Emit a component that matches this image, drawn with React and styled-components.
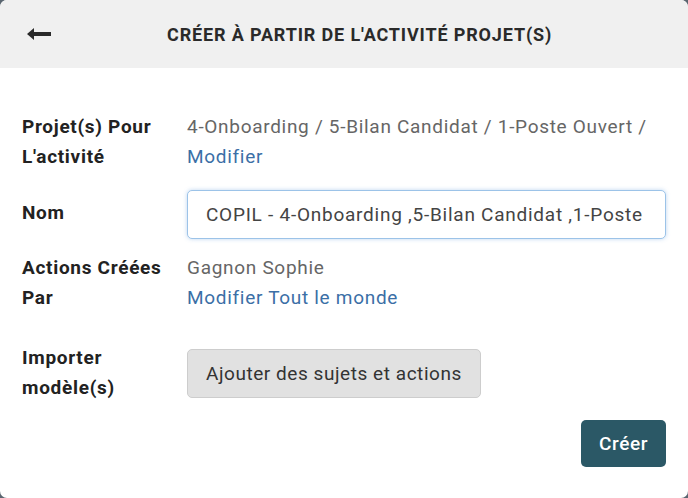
import React from 'react';
import styled, { createGlobalStyle } from 'styled-components';

const GlobalStyle = createGlobalStyle`
  html, body {
    margin: 0;
    padding: 0;
    background: #5a6670;
  }
  body {
    font-family: Roboto, "Liberation Sans", sans-serif;
  }
  * { box-sizing: border-box; }
`;

const Modal = styled.div`
  width: 688px;
  height: 498px;
  background: #fff;
  border-radius: 7px;
  overflow: hidden;
  display: flex;
  flex-direction: column;
`;

const Header = styled.div`
  height: 68px;
  background: #f0f0f0;
  display: flex;
  align-items: center;
  padding-left: 26px;
`;

const BackButton = styled.button`
  border: 0;
  background: none;
  padding: 0;
  width: 28px;
  height: 20px;
  display: flex;
  align-items: center;
  cursor: pointer;
`;

const Title = styled.h1`
  margin: 0 0 0 113px;
  font-size: 18px;
  font-weight: 700;
  color: #2a2a2a;
  letter-spacing: 0.85px;
`;

const Body = styled.div`
  flex: 1;
  display: flex;
  flex-direction: column;
  padding: 44px 22px 0 22px;
  font-size: 19px;
  letter-spacing: 0.7px;
`;

const Row = styled.div`
  display: grid;
  grid-template-columns: 165px 1fr;
  align-items: ${p => (p.$center ? 'center' : 'start')};
  margin-bottom: ${p => p.$after || 16}px;
`;

const Label = styled.div`
  font-weight: 700;
  line-height: 30px;
  color: #222;
  margin-top: ${p => p.$lift || 0}px;
`;

const Value = styled.div`
  line-height: 30px;
  color: #666;
`;

const Link = styled.a`
  display: block;
  color: #3b6fa6;
  text-decoration: none;
  cursor: pointer;
`;

const Input = styled.input`
  width: 100%;
  height: 49px;
  border: 1px solid #9cc3e8;
  border-radius: 5px;
  box-shadow: 0 0 4px rgba(110, 165, 225, 0.45);
  padding: 0 18px;
  font-family: inherit;
  font-size: 19px;
  letter-spacing: 0.75px;
  color: #444;
  outline: none;
`;

const GreyButton = styled.button`
  justify-self: start;
  height: 49px;
  padding: 0 18px;
  background: #e1e1e1;
  border: 1px solid #cdcdcd;
  border-radius: 5px;
  font-family: inherit;
  font-size: 19px;
  letter-spacing: 0.55px;
  color: #333;
  cursor: pointer;
`;

const Footer = styled.div`
  display: flex;
  justify-content: flex-end;
`;

const PrimaryButton = styled.button`
  height: 47px;
  padding: 0 18px;
  background: #2b5866;
  border: 0;
  border-radius: 5px;
  font-family: inherit;
  font-size: 19px;
  letter-spacing: 0.6px;
  font-weight: 500;
  color: #fff;
  cursor: pointer;
`;

const ArrowLeft = () => (
  <svg width="26" height="14" viewBox="0 0 26 14">
    <path d="M1 7 L8 1 L8 5 L25 5 L25 9 L8 9 L8 13 Z" fill="#2a2a2a" />
  </svg>
);

export default function App() {
  return (
    <>
      <GlobalStyle />
      <Modal>
        <Header>
          <BackButton aria-label="Retour">
            <ArrowLeft />
          </BackButton>
          <Title>CRÉER À PARTIR DE L'ACTIVITÉ PROJET(S)</Title>
        </Header>
        <Body>
          <Row $after={18}>
            <Label>Projet(s) Pour<br />L'activité</Label>
            <Value>
              4-Onboarding / 5-Bilan Candidat / 1-Poste Ouvert /
              <Link>Modifier</Link>
            </Value>
          </Row>
          <Row $center $after={14}>
            <Label $lift={-4}>Nom</Label>
            <Input defaultValue="COPIL - 4-Onboarding ,5-Bilan Candidat ,1-Poste Ouvert" />
          </Row>
          <Row $after={30}>
            <Label>Actions Créées<br />Par</Label>
            <Value>
              Gagnon Sophie
              <Link>Modifier Tout le monde</Link>
            </Value>
          </Row>
          <Row $center $after={17}>
            <Label>Importer<br />modèle(s)</Label>
            <GreyButton>Ajouter des sujets et actions</GreyButton>
          </Row>
          <Footer>
            <PrimaryButton>Créer</PrimaryButton>
          </Footer>
        </Body>
      </Modal>
    </>
  );
}
